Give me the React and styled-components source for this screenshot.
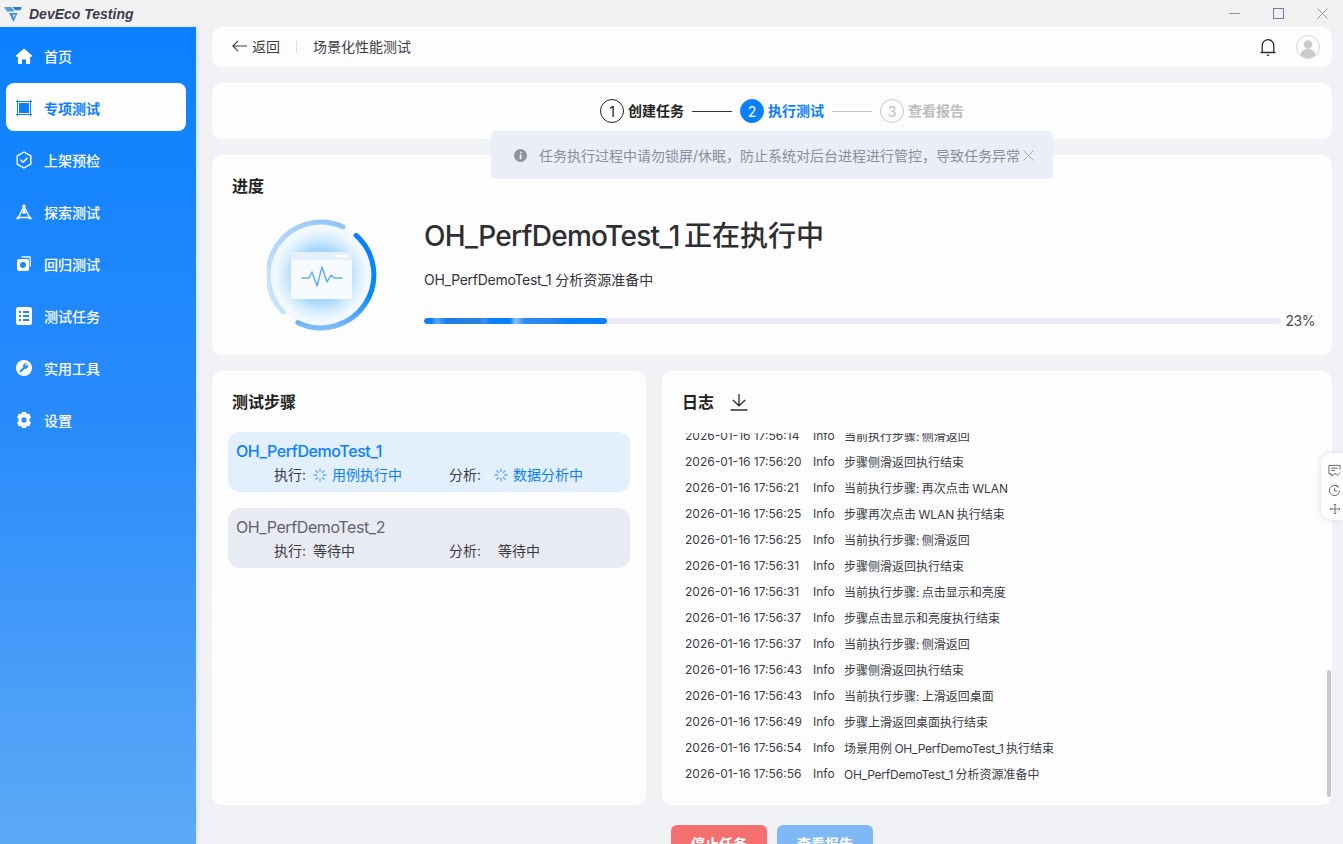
import React from "react";
import styled, { createGlobalStyle } from "styled-components";

const GlobalStyle = createGlobalStyle`
  html, body { margin: 0; padding: 0; height: 100%; overflow: hidden; }
  body { font-family: Inter, "Noto Sans CJK SC", "Noto Sans", sans-serif; color: #33333a; }
  * { box-sizing: border-box; }
`;

const Page = styled.div`
  position: relative;
  width: 100%;
  height: 100vh;
  overflow: hidden;
  display: flex;
  flex-direction: column;
  background: #f0f2f6;
`;

const TitleBar = styled.div`
  height: 27px;
  flex: none;
  display: flex;
  align-items: center;
  padding-left: 4px;
  background: #f2f2f3;
`;

const AppName = styled.span`
  margin-left: 7px;
  font: italic bold 14px "Liberation Sans", sans-serif;
  color: #3b3b4a;
`;

const WindowControls = styled.div`
  margin-left: auto;
  margin-right: -1px;
  display: flex;
  align-items: center;
`;

const WindowButton = styled.div`
  width: 44px;
  height: 27px;
  display: flex;
  align-items: center;
  justify-content: center;
`;

const Body = styled.div`
  flex: 1;
  display: flex;
  min-height: 0;
`;

const Sidebar = styled.nav`
  width: 196px;
  flex: none;
  padding: 4px 10px 0 6px;
  display: flex;
  flex-direction: column;
  gap: 4px;
  background: linear-gradient(180deg, #0a80ff 0%, #2a8cfb 50%, #5ea9f6 100%);
  box-shadow: 2px 0 4px rgba(120, 130, 170, 0.16);
`;

const NavItem = styled.div`
  height: 48px;
  display: flex;
  align-items: center;
  gap: 12px;
  padding: 2px 0 0 10px;
  border-radius: 8px;
  font-size: 14px;
  font-weight: ${(p) => (p.$active ? 700 : 500)};
  color: ${(p) => (p.$active ? "#0a80ff" : "#fff")};
  background: ${(p) => (p.$active ? "#fdfdfe" : "transparent")};
`;

const Main = styled.main`
  flex: 1;
  min-width: 0;
  padding-left: 16px;
  padding-right: 11px;
  display: flex;
  flex-direction: column;
  gap: 16px;
`;

const Card = styled.section`
  background: #fdfdfe;
  border-radius: 10px;
`;

const Latin = styled.span`
  letter-spacing: ${(p) => p.$spacing || "-0.02em"};
`;

const Header = styled(Card)`
  height: 40px;
  flex: none;
  display: flex;
  align-items: center;
  padding: 0 12px 2px 20px;
  font-size: 14px;
  color: #3c3c44;
`;

const BackLink = styled.div`
  display: flex;
  align-items: center;
  gap: 5px;
`;

const HeaderDivider = styled.span`
  width: 1px;
  height: 12px;
  margin: 2px 16px 0;
  background: #d9dbe0;
`;

const HeaderRight = styled.div`
  margin-left: auto;
  padding-top: 2px;
  display: flex;
  align-items: center;
  gap: 19px;
`;

const StepperCard = styled(Card)`
  height: 56px;
  flex: none;
  display: flex;
  align-items: center;
  justify-content: center;
  padding: 0 0 0 20px;
`;

const StepCircle = styled.span`
  width: 24px;
  height: 24px;
  border-radius: 50%;
  display: flex;
  align-items: center;
  justify-content: center;
  font-size: 14px;
  color: ${(p) => (p.$state === "active" ? "#fff" : p.$state === "done" ? "#222" : "#bdbdbd")};
  background: ${(p) => (p.$state === "active" ? "#0a80ff" : "transparent")};
  border: 1px solid ${(p) => (p.$state === "active" ? "#0a80ff" : p.$state === "done" ? "#222" : "#c8c8c8")};
`;

const StepLabel = styled.span`
  margin: -2px 0 0 4px;
  font-size: 14px;
  font-weight: 700;
  color: ${(p) => (p.$state === "active" ? "#0a80ff" : p.$state === "done" ? "#222" : "#bdbdbd")};
`;

const StepLine = styled.span`
  width: 40px;
  height: 1px;
  margin: 0 8px;
  background: ${(p) => (p.$dark ? "#333" : "#c4c4c4")};
`;

const Notice = styled.div`
  position: absolute;
  left: 491px;
  top: 131px;
  width: 562px;
  height: 48px;
  display: flex;
  align-items: center;
  padding-left: 23px;
  border-radius: 4px;
  background: #e9eef8;
  font-size: 14px;
  color: #8a8f99;
  z-index: 2;
`;

const NoticeText = styled.span`
  margin: 0 3px 0 12px;
  white-space: nowrap;
`;

const ProgressCard = styled(Card)`
  height: 200px;
  flex: none;
  padding: 20px 17px 0 20px;
`;

const CardTitle = styled.h2`
  margin: 0;
  font-size: 16px;
  line-height: 22px;
  font-weight: 700;
  color: #222;
`;

const ProgressBody = styled.div`
  display: flex;
  align-items: flex-start;
  margin-top: 9px;
`;

const Illustration = styled.div`
  width: 192px;
  padding: 11px 0 0 35px;
  flex: none;
`;

const ProgressInfo = styled.div`
  flex: 1;
  min-width: 0;
  padding-top: 10px;
  display: flex;
  flex-direction: column;
`;

const RunTitle = styled.div`
  font-size: 28px;
  line-height: 40px;
  font-weight: 500;
  color: #2e2e33;
  word-spacing: -3px;
  white-space: nowrap;
`;

const RunSub = styled.div`
  margin-top: 14px;
  font-size: 14px;
  line-height: 20px;
  color: #33333a;
`;

const BarRow = styled.div`
  margin-top: 22px;
  display: flex;
  align-items: center;
  gap: 5px;
  font-size: 14px;
  letter-spacing: -0.5px;
  color: #4a4a52;
`;

const BarTrack = styled.div`
  flex: 1;
  height: 6px;
  border-radius: 3px;
  background: #e8ebf3;
  overflow: hidden;
`;

const BarFill = styled.div`
  height: 100%;
  border-radius: 3px;
  background: linear-gradient(90deg, #0a80ff 0 4%, #5ba8fb 7%, #1c7fe8 12%, #2b7fdd 30%, #3c8ff0 33%, #0a80ff 36%, #0a80ff 47%, #8cc2fb 50%, #2a8cf5 55%, #2b87ea 70%, #0a80ff 78%, #0a80ff 100%);
`;

const LowerRow = styled.div`
  height: 434px;
  flex: none;
  display: grid;
  grid-template-columns: 434px 670px;
  gap: 16px;
`;

const StepsCard = styled(Card)`
  padding: 20px 16px 0;
  display: flex;
  flex-direction: column;
`;

const StepsTitle = styled(CardTitle)`
  padding-left: 4px;
`;

const CaseList = styled.div`
  margin-top: 19px;
  display: flex;
  flex-direction: column;
  gap: 16px;
`;

const CaseItem = styled.div`
  height: 60px;
  padding: 8px 8px 0;
  border-radius: 12px;
  background: ${(p) => (p.$running ? "#e2effd" : "#e9ebf3")};
`;

const CaseName = styled.div`
  font-size: 16px;
  line-height: 22px;
  letter-spacing: -0.41px;
  font-weight: ${(p) => (p.$running ? 500 : 400)};
  color: ${(p) => (p.$running ? "#0a80ff" : "#62626b")};
`;

const CaseStatus = styled.div`
  margin-top: 3px;
  display: grid;
  grid-template-columns: 175px 1fr;
  padding-left: 38px;
  font-size: 14px;
  line-height: 20px;
  color: #3a3a42;
`;

const StatusCell = styled.div`
  display: flex;
  align-items: center;
`;

const StatusLabel = styled.span`
  width: ${(p) => p.$width}px;
  flex: none;
`;

const StatusValue = styled.span`
  display: flex;
  align-items: center;
  gap: 5px;
  color: ${(p) => (p.$running ? "#0a80ff" : "#3a3a42")};
`;

const LogCard = styled(Card)`
  position: relative;
  padding: 20px 0 0 20px;
  display: flex;
  flex-direction: column;
`;

const LogHead = styled.div`
  display: flex;
  align-items: center;
  gap: 16px;
`;

const LogList = styled.div`
  height: 353px;
  margin-top: 20px;
  padding-left: 3px;
  overflow: hidden;
  display: flex;
  flex-direction: column;
  justify-content: flex-end;
`;

const LogRow = styled.div`
  height: 26px;
  flex: none;
  display: flex;
  align-items: center;
  font-size: 12px;
  color: #3c3c44;
  white-space: pre;
`;

const LogTime = styled.span`
  width: 128px;
  flex: none;
`;

const LogLevel = styled.span`
  width: 31px;
  flex: none;
`;

const LogMessage = styled.span`
  word-spacing: -1px;
`;

const Scrollbar = styled.div`
  position: absolute;
  right: 1px;
  top: 299px;
  width: 4px;
  height: 127px;
  border-radius: 2px;
  background: #c9c9cc;
`;

const Actions = styled.div`
  display: flex;
  justify-content: center;
  gap: 10px;
  margin-top: 4px;
`;

const ActionButton = styled.button`
  width: 96px;
  height: 36px;
  flex: none;
  border: 0;
  border-radius: 6px;
  font: 700 14px Inter, "Noto Sans CJK SC", sans-serif;
  color: #fff;
  background: ${(p) => (p.$danger ? "#f56f6f" : "#7eb9f6")};
`;

const FloatTools = styled.div`
  position: absolute;
  right: 0;
  top: 453px;
  width: 22px;
  height: 67px;
  display: flex;
  flex-direction: column;
  align-items: center;
  justify-content: center;
  gap: 7px;
  padding: 5px 0 0 5px;
  border-radius: 11px 0 0 11px;
  background: #fdfdfe;
  box-shadow: -1px 0 5px rgba(140, 150, 170, 0.25);
  color: #5a5f68;
  z-index: 3;
`;

const Logo = () => (
  <svg width="18" height="16" viewBox="0 0 18 16">
    <path d="M0 1h7.5l3 4.5H3z" fill="#4f9fd8" />
    <path d="M8.5 1H18l-1.6 3.2H11z" fill="#2f7fc4" />
    <path d="M5 7h8.5L9.500 16z" fill="#3d8fd0" />
    <path d="M9 8.500h2.500L9.500 12z" fill="#f2f2f3" />
  </svg>
);

const HomeIcon = () => (
  <svg width="16" height="16" viewBox="0 0 16 16" fill="currentColor">
    <path d="M8 .4 16 7.6v1.1h-1.900V15a1 1 0 0 1-1 1H10v-4.600H6V16H2.900a1 1 0 0 1-1-1V8.700H0V7.600z" />
  </svg>
);

const ChipIcon = () => (
  <svg width="16" height="16" viewBox="0 0 16 16" fill="none" stroke="currentColor">
    <rect x="1.500" y="1.500" width="13" height="13" strokeWidth="1" />
    <rect x="3" y="3" width="10" height="10" fill="currentColor" stroke="none" />
    <path d="M0 1.500h2M0 14.500h2M14 1.500h2M14 14.500h2M1.500 0v2M14.500 0v2M1.500 14v2M14.500 14v2" strokeWidth="1" />
  </svg>
);

const ShieldIcon = () => (
  <svg width="16" height="18" viewBox="0 0 16 18" fill="none" stroke="currentColor" strokeWidth="1.400">
    <path d="M8 1l6.800 3.900v8.200L8 17l-6.800-3.900V4.900z" strokeLinejoin="round" />
    <path d="M4.800 9l2.300 2.200 4-4" strokeLinecap="round" />
  </svg>
);

const ExploreIcon = () => (
  <svg width="16" height="16" viewBox="0 0 16 16" fill="none" stroke="currentColor" strokeWidth="1.400">
    <path d="M8 2 2.500 13.500h11z" />
    <path d="M8 2 6 9.500h4z" fill="currentColor" stroke="none" />
    <circle cx="8" cy="2" r="1.600" fill="currentColor" stroke="none" />
    <circle cx="2" cy="14" r="1.600" fill="currentColor" stroke="none" />
    <circle cx="14" cy="14" r="1.600" fill="currentColor" stroke="none" />
  </svg>
);

const RegressIcon = () => (
  <svg width="16" height="16" viewBox="0 0 16 16" fill="currentColor">
    <path d="M5 1.500A1.500 1.500 0 0 1 6.500 0h7A1.500 1.500 0 0 1 15 1.500v8a1.500 1.500 0 0 1-1.500 1.500V3a1 1 0 0 0-1-1z" opacity=".75" />
    <path fillRule="evenodd" d="M3 3h8a2 2 0 0 1 2 2v8a2 2 0 0 1-2 2H3a2 2 0 0 1-2-2V5a2 2 0 0 1 2-2zm4 3a3 3 0 1 0 0 6 3 3 0 0 0 0-6z" />
  </svg>
);

const TaskIcon = () => (
  <svg width="16" height="18" viewBox="0 0 16 18" fill="currentColor">
    <path fillRule="evenodd" d="M2.500 0h11A2.500 2.500 0 0 1 16 2.500v13a2.500 2.500 0 0 1-2.500 2.500h-11A2.500 2.500 0 0 1 0 15.500v-13A2.500 2.500 0 0 1 2.500 0zM3 4v2h2V4zm4 0v2h6V4zM3 8v2h2V8zm4 0v2h6V8zm-4 4v2h2v-2zm4 0v2h6v-2z" />
  </svg>
);

const ToolIcon = () => (
  <svg width="16" height="16" viewBox="0 0 16 16">
    <circle cx="8" cy="8" r="8" fill="currentColor" />
    <path d="M11.800 4.200 9.900 6.100l-.9-.9 1.900-1.900a3 3 0 0 0-3.700 3.900L4 10.400a1.100 1.100 0 0 0 1.600 1.600l3.100-3.200a3 3 0 0 0 3.100-4.600z" fill="#2a8cfb" />
  </svg>
);

const GearIcon = () => (
  <svg width="16" height="16" viewBox="0 0 16 16" fill="currentColor">
    <path fillRule="evenodd" d="M5.900 0h4.200l.6 2.200 2.200-.6 2.100 3.600-1.600 1.600v2.400l1.600 1.600-2.100 3.600-2.200-.6-.6 2.200H5.900l-.6-2.200-2.200.6L1 10.800l1.600-1.600V6.800L1 5.200l2.100-3.600 2.200.6zM8 5.300a2.700 2.700 0 1 0 0 5.400 2.700 2.700 0 0 0 0-5.400z" />
  </svg>
);

const BackArrow = () => (
  <svg width="15" height="12" viewBox="0 0 15 12" fill="none" stroke="#3c3c44" strokeWidth="1.100">
    <path d="M15 6H1M6 .8 .8 6 6 11.200" />
  </svg>
);

const BellIcon = () => (
  <svg width="18" height="20" viewBox="0 0 18 20" fill="none" stroke="#2c2c36" strokeWidth="1.300">
    <path d="M1.500 15.500h15M3.200 15.500V8.500a5.800 5.800 0 0 1 11.600 0v7" />
    <path d="M7.800 18.200h2.400" />
  </svg>
);

const Avatar = () => (
  <svg width="24" height="24" viewBox="0 0 24 24">
    <circle cx="12" cy="12" r="11.500" fill="#fdfdfe" stroke="#d6d6d8" />
    <circle cx="12" cy="9.500" r="4.200" fill="#c9c9cc" />
    <path d="M4.500 20c.8-4.200 3.700-6 7.500-6s6.700 1.800 7.500 6a11 11 0 0 1-15 0z" fill="#c9c9cc" />
  </svg>
);

const InfoIcon = () => (
  <svg width="13" height="13" viewBox="0 0 13 13">
    <circle cx="6.500" cy="6.500" r="6.500" fill="#8f9299" />
    <rect x="5.700" y="5.500" width="1.800" height="4.800" rx=".4" fill="#e9eef8" />
    <circle cx="6.800" cy="3.500" r="1" fill="#e9eef8" />
  </svg>
);

const CloseIcon = ({ size = 11, color = "#a5a9b2" }) => (
  <svg width={size} height={size} viewBox="0 0 11 11" fill="none" stroke={color} strokeWidth="1">
    <path d="M.5.500l10 10M10.500.500l-10 10" />
  </svg>
);

const Spinner = () => (
  <svg width="14" height="14" viewBox="0 0 14 14" stroke="#6aaef8" strokeWidth="1.400" strokeLinecap="round">
    <path d="M7 1v2.500M7 10.500V13M1 7h2.500M10.500 7H13M2.800 2.800l1.800 1.800M9.400 9.400l1.800 1.800M11.200 2.800 9.400 4.600M4.600 9.400l-1.800 1.800" />
  </svg>
);

const DownloadIcon = () => (
  <svg width="18" height="18" viewBox="0 0 18 18" fill="none" stroke="#2c2c36" strokeWidth="1.300">
    <path d="M9 1v11.500M2.800 7 9 12.800 15.200 7M.5 17h17" />
  </svg>
);

const RunIllustration = () => (
  <svg width="116" height="116" viewBox="0 0 116 116" fill="none">
    <defs>
      <radialGradient id="glow" cx="50%" cy="50%" r="50%">
        <stop offset="0%" stopColor="#7cc2fa" />
        <stop offset="60%" stopColor="#a9d8fb" />
        <stop offset="82%" stopColor="#d6ecfd" />
        <stop offset="100%" stopColor="#eef7fe" />
      </radialGradient>
      <linearGradient id="sweep" x1="0" y1="0" x2="0" y2="1">
        <stop offset="0%" stopColor="#0a80ff" />
        <stop offset="65%" stopColor="#0a86fb" />
        <stop offset="100%" stopColor="#7dbcf8" />
      </linearGradient>
      <linearGradient id="paleArc" x1="0" y1="1" x2="1" y2="0">
        <stop offset="0%" stopColor="#cfe6fc" />
        <stop offset="100%" stopColor="#8ec4f8" />
      </linearGradient>
    </defs>
    <circle cx="54" cy="58" r="52" fill="#f1f8fe" />
    <circle cx="54" cy="58" r="45" fill="url(#glow)" />
    <path d="M16.300 95.200A53 53 0 0 1 75.900 9.700" stroke="url(#paleArc)" strokeWidth="5" strokeLinecap="round" />
    <path d="M89.100 18.300A53 53 0 0 1 31 105.700" stroke="url(#sweep)" strokeWidth="5" strokeLinecap="round" />
    <rect x="24" y="35" width="61" height="47" fill="#f7fbfe" />
    <rect x="24" y="35" width="61" height="8" fill="#e4f1fc" />
    <rect x="68" y="38" width="13" height="2" fill="#ffffff" />
    <path d="M35 61h7l3-6 5 14 5-19 5 15 4-7 3 3h8" stroke="#66aef0" strokeWidth="1.500" strokeLinejoin="round" strokeLinecap="round" />
  </svg>
);

const navItems = [
  { label: "首页", icon: <HomeIcon /> },
  { label: "专项测试", icon: <ChipIcon />, active: true },
  { label: "上架预检", icon: <ShieldIcon /> },
  { label: "探索测试", icon: <ExploreIcon /> },
  { label: "回归测试", icon: <RegressIcon /> },
  { label: "测试任务", icon: <TaskIcon /> },
  { label: "实用工具", icon: <ToolIcon /> },
  { label: "设置", icon: <GearIcon /> },
];

const logs = [
  ["2026-01-16 17:56:14", "当前执行步骤: 侧滑返回"],
  ["2026-01-16 17:56:20", "步骤侧滑返回执行结束"],
  ["2026-01-16 17:56:21", "当前执行步骤: 再次点击 WLAN"],
  ["2026-01-16 17:56:25", "步骤再次点击 WLAN 执行结束"],
  ["2026-01-16 17:56:25", "当前执行步骤: 侧滑返回"],
  ["2026-01-16 17:56:31", "步骤侧滑返回执行结束"],
  ["2026-01-16 17:56:31", "当前执行步骤: 点击显示和亮度"],
  ["2026-01-16 17:56:37", "步骤点击显示和亮度执行结束"],
  ["2026-01-16 17:56:37", "当前执行步骤: 侧滑返回"],
  ["2026-01-16 17:56:43", "步骤侧滑返回执行结束"],
  ["2026-01-16 17:56:43", "当前执行步骤: 上滑返回桌面"],
  ["2026-01-16 17:56:49", "步骤上滑返回桌面执行结束"],
  ["2026-01-16 17:56:54", <>场景用例 <Latin>OH_PerfDemoTest_1</Latin> 执行结束</>],
  ["2026-01-16 17:56:56", <><Latin>OH_PerfDemoTest_1</Latin> 分析资源准备中</>],
];

export default function App() {
  return (
    <Page>
      <GlobalStyle />
      <TitleBar>
        <Logo />
        <AppName>DevEco Testing</AppName>
        <WindowControls>
          <WindowButton>
            <svg width="11" height="1" viewBox="0 0 11 1"><path d="M0 .5h11" stroke="#8a93a8" /></svg>
          </WindowButton>
          <WindowButton>
            <svg width="11" height="11" viewBox="0 0 11 11" fill="none"><rect x=".5" y=".5" width="10" height="10" stroke="#6f7c9c" /></svg>
          </WindowButton>
          <WindowButton>
            <CloseIcon color="#8a93a8" />
          </WindowButton>
        </WindowControls>
      </TitleBar>
      <Body>
        <Sidebar>
          {navItems.map((item) => (
            <NavItem key={item.label} $active={item.active}>
              {item.icon}
              {item.label}
            </NavItem>
          ))}
        </Sidebar>
        <Main>
          <Header>
            <BackLink>
              <BackArrow />
              返回
            </BackLink>
            <HeaderDivider />
            场景化性能测试
            <HeaderRight>
              <BellIcon />
              <Avatar />
            </HeaderRight>
          </Header>
          <StepperCard>
            <StepCircle $state="done">1</StepCircle>
            <StepLabel $state="done">创建任务</StepLabel>
            <StepLine $dark />
            <StepCircle $state="active">2</StepCircle>
            <StepLabel $state="active">执行测试</StepLabel>
            <StepLine />
            <StepCircle>3</StepCircle>
            <StepLabel>查看报告</StepLabel>
          </StepperCard>
          <ProgressCard>
            <CardTitle>进度</CardTitle>
            <ProgressBody>
              <Illustration>
                <RunIllustration />
              </Illustration>
              <ProgressInfo>
                <RunTitle><Latin $spacing="-0.7px">OH_PerfDemoTest_1</Latin> 正在执行中</RunTitle>
                <RunSub><Latin>OH_PerfDemoTest_1</Latin> 分析资源准备中</RunSub>
                <BarRow>
                  <BarTrack>
                    <BarFill style={{ width: "21.4%" }} />
                  </BarTrack>
                  23%
                </BarRow>
              </ProgressInfo>
            </ProgressBody>
          </ProgressCard>
          <LowerRow>
            <StepsCard>
              <StepsTitle>测试步骤</StepsTitle>
              <CaseList>
                <CaseItem $running>
                  <CaseName $running>OH_PerfDemoTest_1</CaseName>
                  <CaseStatus>
                    <StatusCell>
                      <StatusLabel $width={39}>执行:</StatusLabel>
                      <StatusValue $running><Spinner />用例执行中</StatusValue>
                    </StatusCell>
                    <StatusCell>
                      <StatusLabel $width={45}>分析:</StatusLabel>
                      <StatusValue $running><Spinner />数据分析中</StatusValue>
                    </StatusCell>
                  </CaseStatus>
                </CaseItem>
                <CaseItem>
                  <CaseName>OH_PerfDemoTest_2</CaseName>
                  <CaseStatus>
                    <StatusCell>
                      <StatusLabel $width={39}>执行:</StatusLabel>
                      <StatusValue>等待中</StatusValue>
                    </StatusCell>
                    <StatusCell>
                      <StatusLabel $width={49}>分析:</StatusLabel>
                      <StatusValue>等待中</StatusValue>
                    </StatusCell>
                  </CaseStatus>
                </CaseItem>
              </CaseList>
            </StepsCard>
            <LogCard>
              <LogHead>
                <CardTitle>日志</CardTitle>
                <DownloadIcon />
              </LogHead>
              <LogList>
                {logs.map(([time, msg], i) => (
                  <LogRow key={i}>
                    <LogTime>{time}</LogTime>
                    <LogLevel>Info</LogLevel>
                    <LogMessage>{msg}</LogMessage>
                  </LogRow>
                ))}
              </LogList>
              <Scrollbar />
            </LogCard>
          </LowerRow>
          <Actions>
            <ActionButton $danger>停止任务</ActionButton>
            <ActionButton>查看报告</ActionButton>
          </Actions>
        </Main>
      </Body>
      <Notice>
        <InfoIcon />
        <NoticeText>任务执行过程中请勿锁屏/休眠，防止系统对后台进程进行管控，导致任务异常</NoticeText>
        <CloseIcon />
      </Notice>
      <FloatTools>
        <svg width="13" height="13" viewBox="0 0 14 14" fill="none" stroke="currentColor">
          <path d="M13 6V1.500H1v9h2.500V13L7 10.500h2M3.500 4.500h7M3.500 7h4M8.500 11l1.500 1.500 3-3" />
        </svg>
        <svg width="13" height="13" viewBox="0 0 14 14" fill="none" stroke="currentColor">
          <path d="M12.500 7A5.500 5.500 0 1 1 9.500 2.100M7 4v3.500h3M9.500 .5v2.500h2.500" />
        </svg>
        <svg width="10" height="10" viewBox="0 0 12 12" fill="none" stroke="currentColor">
          <path d="M6 0v12M0 6h12M4.500 1.500 6 0l1.500 1.500M4.500 10.500 6 12l1.500-1.500M1.500 4.500 0 6l1.500 1.500M10.500 4.500 12 6l-1.500 1.500" />
        </svg>
      </FloatTools>
    </Page>
  );
}
